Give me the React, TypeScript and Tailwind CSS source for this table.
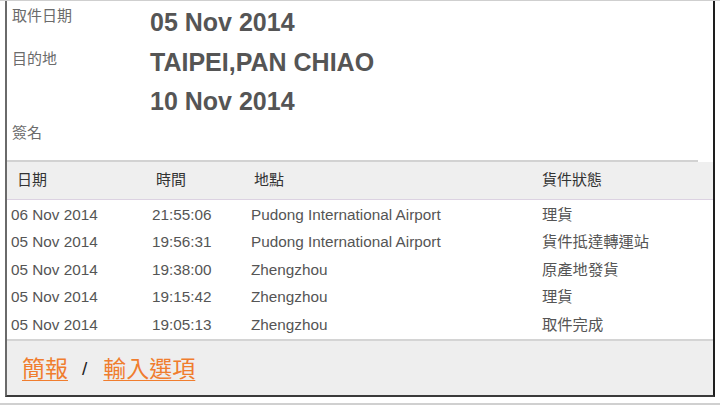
import React from "react";

const font = { fontFamily: '"Liberation Sans", Arial, "Noto Sans CJK TC", sans-serif' };

const events = [
  { date: "06 Nov 2014", time: "21:55:06", place: "Pudong International Airport", status: "理貨" },
  { date: "05 Nov 2014", time: "19:56:31", place: "Pudong International Airport", status: "貨件抵達轉運站" },
  { date: "05 Nov 2014", time: "19:38:00", place: "Zhengzhou", status: "原產地發貨" },
  { date: "05 Nov 2014", time: "19:15:42", place: "Zhengzhou", status: "理貨" },
  { date: "05 Nov 2014", time: "19:05:13", place: "Zhengzhou", status: "取件完成" },
];

export default function App() {
  return (
    <div className="w-[720px] h-[405px] bg-white overflow-hidden flex flex-col" style={font}>
      <div className="h-px bg-[#cfcfcf]" />
      <div className="ml-[5px] w-[710px] h-[396px] flex flex-col border-l-2 border-r-2 border-b-2 border-l-[#6a6a6a] border-r-[#1e1e1e] border-b-[#3a3a3a]">
        {/* summary */}
        <div className="h-[39px] flex items-start">
          <div className="w-[143px] pl-[5px] pt-[5px] text-[15px] leading-[20px] text-[#6b6b6b]">取件日期</div>
          <div className="pt-[7px] text-[25px] leading-[28px] font-bold text-[#555]">05 Nov 2014</div>
        </div>
        <div className="h-[40px] flex items-start">
          <div className="w-[143px] pl-[5px] pt-[9px] text-[15px] leading-[20px] text-[#6b6b6b]">目的地</div>
          <div className="pt-[8px] text-[25px] leading-[28px] font-bold text-[#555]">TAIPEI,PAN CHIAO</div>
        </div>
        <div className="h-[40px] flex items-start">
          <div className="w-[143px]" />
          <div className="pt-[7px] text-[25px] leading-[28px] font-bold text-[#555]">10 Nov 2014</div>
        </div>
        <div className="h-[40px] flex items-start">
          <div className="w-[143px] pl-[5px] pt-[3px] text-[15px] leading-[20px] text-[#6b6b6b]">簽名</div>
        </div>
        <div className="h-[2px] mr-[15px] bg-[#d2d2d2]" />

        {/* table header */}
        <div className="h-[38px] flex items-center bg-[#efefef] border-b border-[#dcd2e2] text-[15px] text-[#333]">
          <div className="w-[141px] pl-[10px]">日期</div>
          <div className="w-[99px] pl-[8px]">時間</div>
          <div className="w-[291px] pl-[7px]">地點</div>
          <div className="pl-[4px]">貨件狀態</div>
        </div>

        {/* rows */}
        <div className="flex flex-col pt-[1.5px]">
          {events.map((e, i) => (
            <div key={i} className="h-[27.5px] flex items-center text-[15.3px] text-[#555]">
              <div className="w-[141px] pl-[4px]">{e.date}</div>
              <div className="w-[99px] pl-[4px]">{e.time}</div>
              <div className="w-[291px] pl-[4px]">{e.place}</div>
              <div className="pl-[4px]">{e.status}</div>
            </div>
          ))}
        </div>

        {/* footer */}
        <div className="flex-1 flex items-center bg-[#eeeeee] border-t-2 border-[#d4d4d4] pl-[15px] pt-[2px]">
          <a href="#" className="text-[23px] leading-[28px] text-[#f07d2e] underline underline-offset-[3px] decoration-1">簡報</a>
          <span className="ml-[14px] mr-[16px] text-[19px] text-[#222]">/</span>
          <a href="#" className="text-[23px] leading-[28px] text-[#f07d2e] underline underline-offset-[3px] decoration-1">輸入選項</a>
        </div>
      </div>
      <div className="flex-1" />
      <div className="h-[2px] bg-[#d0d0d0]" />
    </div>
  );
}
